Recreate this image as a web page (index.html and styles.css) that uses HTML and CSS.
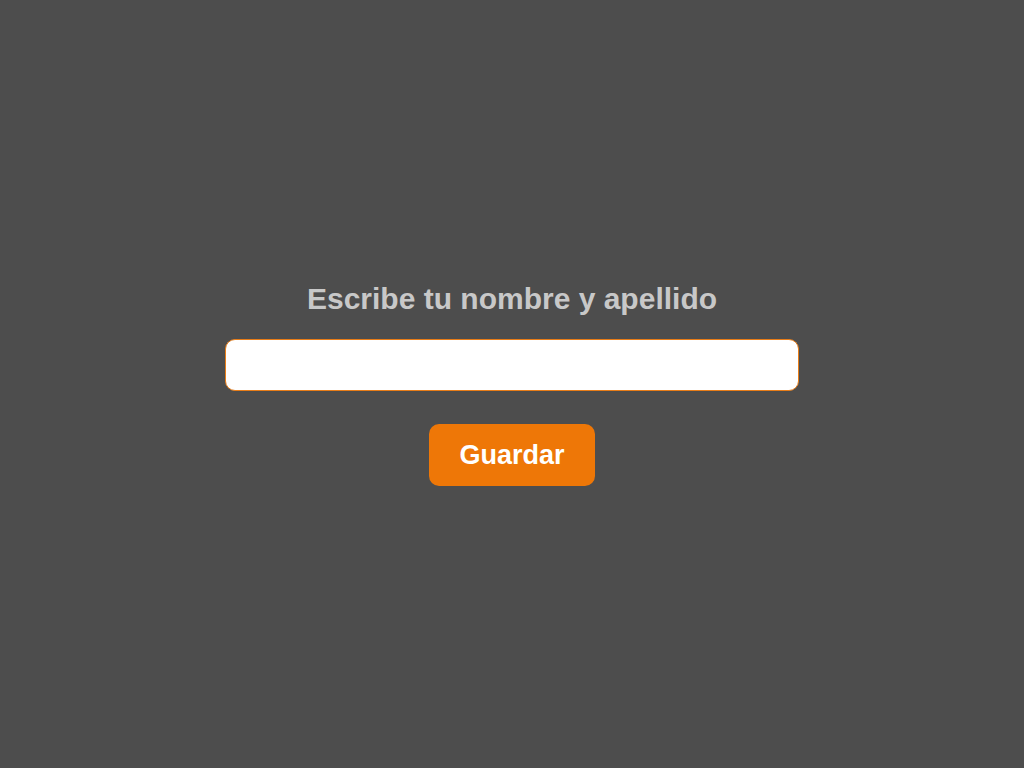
FILE: index.html
```html
<!DOCTYPE html>
<html lang="es">
<head>
<meta charset="utf-8">
<title>Nombre</title>
<link rel="stylesheet" href="styles.css">
</head>
<body>
<main class="screen">
  <form class="form">
    <label class="label" for="name">Escribe tu nombre y apellido</label>
    <input class="field" id="name" type="text">
    <button class="btn" type="button">Guardar</button>
  </form>
</main>
</body>
</html>
```
FILE: styles.css
```css
html, body {
  margin: 0;
  padding: 0;
  height: 100%;
}
body {
  background: #4d4d4d;
  font-family: "Liberation Sans", Arial, sans-serif;
}
.screen {
  height: 100%;
  display: flex;
  align-items: center;
  justify-content: center;
}
.form {
  display: flex;
  flex-direction: column;
  align-items: center;
}
.label {
  color: #c8c8c8;
  font-size: 30px;
  font-weight: bold;
  line-height: 34px;
  margin-bottom: 23px;
}
.field {
  box-sizing: border-box;
  width: 574px;
  height: 52px;
  border: 1px solid #e87d18;
  border-radius: 10px;
  background: #fff;
  outline: none;
  padding: 0 12px;
  font-size: 20px;
  font-family: inherit;
}
.btn {
  margin-top: 33px;
  width: 166px;
  height: 62px;
  border: none;
  border-radius: 10px;
  background: #ee7707;
  color: #fff;
  font-family: inherit;
  font-size: 27px;
  font-weight: bold;
  cursor: pointer;
}
```
